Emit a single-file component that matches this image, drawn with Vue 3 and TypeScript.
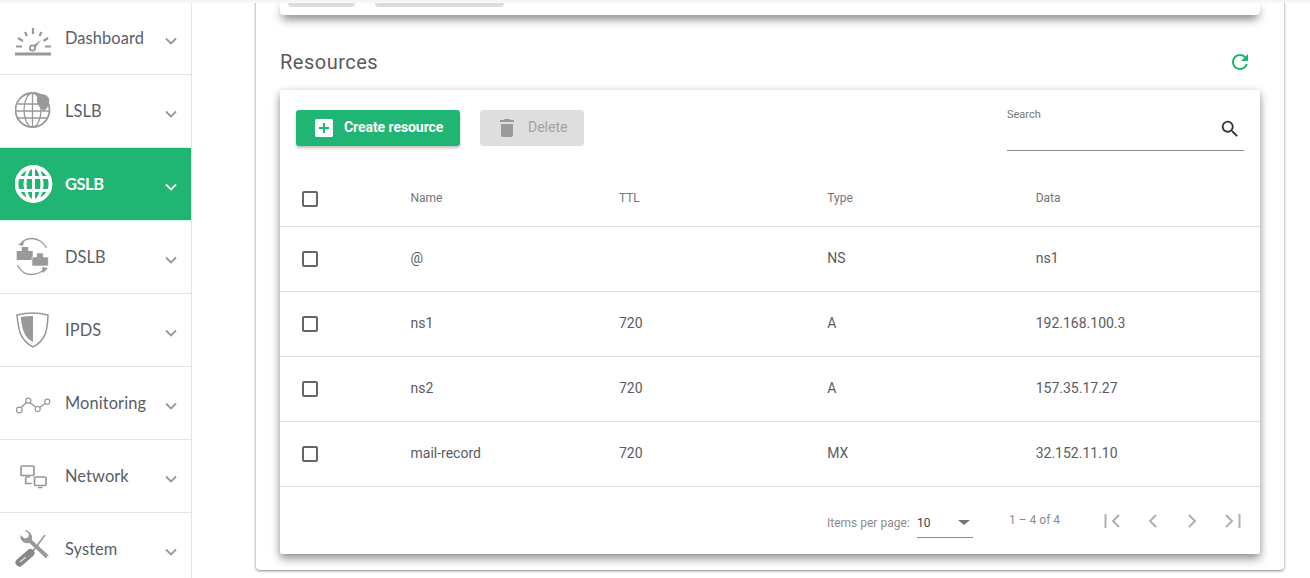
<script setup lang="ts">
const navItems = [
  { key: 'dashboard', label: 'Dashboard', active: false, box: '15 14 40 48' },
  { key: 'lslb', label: 'LSLB', active: false, box: '15 87 40 48' },
  { key: 'gslb', label: 'GSLB', active: true, box: '15 160 40 48' },
  { key: 'dslb', label: 'DSLB', active: false, box: '15 233 40 48' },
  { key: 'ipds', label: 'IPDS', active: false, box: '15 306 40 48' },
  { key: 'monitoring', label: 'Monitoring', active: false, box: '15 379 40 48' },
  { key: 'network', label: 'Network', active: false, box: '15 452 40 48' },
  { key: 'system', label: 'System', active: false, box: '15 525 40 48' },
]
const rows = [
  { name: '@', ttl: '', type: 'NS', data: 'ns1' },
  { name: 'ns1', ttl: '720', type: 'A', data: '192.168.100.3' },
  { name: 'ns2', ttl: '720', type: 'A', data: '157.35.17.27' },
  { name: 'mail-record', ttl: '720', type: 'MX', data: '32.152.11.10' },
]
</script>

<template>
  <div class="page">
    <div class="topshade"></div>
    <nav class="sidebar">
      <div v-for="item in navItems" :key="item.key" class="nav-item" :class="{ active: item.active }">
        <svg class="nav-icon" width="40" height="48" :viewBox="item.box">
          <g v-if="item.key === 'dashboard'">
            <path d="M33 28v6M25 32l2 4M41.500 32l-2 4M18 38l5 3M48 38l-4.500 3M16 46.500h6M45 46.500h6" fill="none" stroke="#999" stroke-width="2.200" />
            <circle cx="32.500" cy="48" r="2.600" fill="none" stroke="#999" stroke-width="1.800" />
            <path d="M33 45.500l8-5.500-5.500 7.500z" fill="#999" />
            <rect x="15" y="52.500" width="36" height="3" fill="#999" />
          </g>
          <g v-else-if="item.key === 'lslb'">
            <g fill="none" stroke="#999" stroke-width="1.300">
              <circle cx="32.500" cy="110" r="17" stroke-width="1.800" />
              <ellipse cx="32.500" cy="110" rx="8.500" ry="17" />
              <path d="M32.500 93v34M17.500 104h30M16 111h33M18 118h29" />
            </g>
            <path d="M38 95c4-2 10 0 11 4 1 4-1 9-5 12-3-2-6-5-7-9-.5-3 0-5 1-7z" fill="#999" />
          </g>
          <g v-else-if="item.key === 'gslb'" fill="none" stroke="#fff">
            <circle cx="33.500" cy="184" r="17" stroke-width="3.800" />
            <ellipse cx="33.500" cy="184" rx="8.500" ry="17" stroke-width="3" />
            <path d="M33.500 167v34M18 177.500h31M18 190.500h31" stroke-width="3" />
          </g>
          <g v-else-if="item.key === 'dslb'">
            <path d="M21 243c3-3 7-4.500 11-4.500 6 0 12 4 14.500 9.500M17.500 265c3 6 8 9.500 13.500 9.500 6 0 10-2 13.500-5" fill="none" stroke="#999" stroke-width="1.300" />
            <path d="M18 244.500l6-3.500-1 5zM48 268l-6-1 1 6z" fill="#999" />
            <path d="M16.700 251h5v-4h6.600v4h4.400v9h-16z" fill="#999" />
            <path d="M32 257h4.700v-4h6.600v4h5v9H32z" fill="#999" stroke="#fff" stroke-width=".6" />
          </g>
          <g v-else-if="item.key === 'ipds'">
            <path d="M17 315c10-2.500 21-2.500 31 0-.5 14-1.500 25-15 32-13.500-7-14.500-18-16-32z" fill="#fff" stroke="#999" stroke-width="1.500" />
            <path d="M20.700 317c4-.6 8-1 12.300-1v26c-9-4.500-11-13-12.300-25z" fill="#999" />
          </g>
          <g v-else-if="item.key === 'monitoring'" fill="none" stroke="#999" stroke-width="1.200">
            <circle cx="19.300" cy="410" r="2.800" />
            <circle cx="28.300" cy="400.700" r="2.500" />
            <circle cx="37.700" cy="409" r="2.500" />
            <circle cx="47.300" cy="401.700" r="2.500" />
            <path d="M21 407.500l5.500-5M30 402.500l5.500 4.500M39.700 407.500l5.500-4" stroke-width="1.500" />
          </g>
          <g v-else-if="item.key === 'network'" fill="none" stroke="#999" stroke-width="1.700">
            <rect x="21" y="466" width="13" height="9.500" rx="1" />
            <rect x="34.500" y="477" width="11.500" height="8.500" rx="1" />
            <path d="M25.700 478v5.500h6M25 477h5M38 487.500h4.500" />
          </g>
          <g v-else>
            <path d="M29 540l18.500 17" stroke="#999" stroke-width="3.800" fill="none" />
            <path d="M24.500 530l4.500 4-1 3.500-3.500 1-4-3.500c-.5 3 .5 6 3.500 7.500 2.500 1.200 4.500 1 6.500-.5 2-2.500 2-5 1-7-1.500-3-4-5-7-5z" fill="#999" />
            <circle cx="48" cy="557" r="1.200" fill="#fff" />
            <path d="M33 551l12-16" stroke="#999" stroke-width="1.600" fill="none" />
            <path d="M19.500 562.500l11-9.500" stroke="#888" stroke-width="8" stroke-linecap="round" fill="none" />
            <path d="M20 562l6-5" stroke="#ddd" stroke-width="1.200" fill="none" />
          </g>
        </svg>
        <span class="nav-label">{{ item.label }}</span>
        <svg class="chev" width="12" height="8" viewBox="0 0 12 8"><path d="M1 1.500l5 5 5-5" fill="none" stroke="currentColor" stroke-width="1.800" /></svg>
      </div>
    </nav>

    <main class="main">
      <div class="outer">
        <div class="top-card">
          <span class="stub stub-a"></span>
          <span class="stub stub-b"></span>
        </div>

        <div class="section-head">
          <h2>Resources</h2>
          <svg width="24" height="24" viewBox="0 0 24 24"><path fill="#21b573" d="M17.650 6.350A7.958 7.958 0 0 0 12 4c-4.420 0-7.990 3.580-7.990 8s3.570 8 7.990 8c3.730 0 6.840-2.550 7.730-6h-2.080A5.990 5.990 0 0 1 12 18c-3.310 0-6-2.690-6-6s2.690-6 6-6c1.660 0 3.140.69 4.220 1.780L13 11h7V4l-2.350 2.350z" /></svg>
        </div>

        <section class="card">
          <div class="toolbar">
            <button class="btn primary">
              <svg width="18" height="18" viewBox="0 0 18 18"><rect width="18" height="18" rx="1.500" fill="#fff" /><path d="M9 4v10M4 9h10" stroke="#21b573" stroke-width="2" /></svg>
              <span>Create resource</span>
            </button>
            <button class="btn disabled">
              <svg width="14" height="18" viewBox="0 0 14 18"><path fill="#9a9a9a" d="M1 5h12v11a2 2 0 0 1-2 2H3a2 2 0 0 1-2-2zM14 1v2H0V1h3.500l1-1h5l1 1z" /></svg>
              <span>Delete</span>
            </button>
            <div class="search">
              <label>Search</label>
              <svg width="22" height="22" viewBox="0 0 24 24"><path fill="#333" d="M15.500 14h-.79l-.28-.27A6.471 6.471 0 0 0 16 9.500 6.500 6.500 0 1 0 9.500 16c1.610 0 3.090-.59 4.230-1.570l.27.28v.79l5 4.990L20.490 19l-4.990-5zm-6 0C7.010 14 5 11.990 5 9.500S7.010 5 9.500 5 14 7.010 14 9.500 11.990 14 9.500 14z" /></svg>
            </div>
          </div>

          <div class="row head">
            <span class="cell-check"><i class="box"></i></span>
            <span>Name</span><span>TTL</span><span>Type</span><span>Data</span>
          </div>
          <div v-for="r in rows" :key="r.name" class="row body">
            <span class="cell-check"><i class="box"></i></span>
            <span class="txt">{{ r.name }}</span><span class="txt">{{ r.ttl }}</span><span class="txt">{{ r.type }}</span><span class="txt">{{ r.data }}</span>
          </div>

          <div class="pager">
            <span class="ipp">Items per page:</span>
            <span class="select"><span>10</span><i class="caret"></i></span>
            <span class="range">1 – 4 of 4</span>
            <span class="pager-btns">
              <svg width="18" height="14" viewBox="0 0 18 14"><path d="M1.500 0v14M15 1L9 7l6 6" fill="none" stroke="#b0b0b0" stroke-width="2" /></svg>
              <svg width="18" height="14" viewBox="0 0 18 14"><path d="M12 1L6 7l6 6" fill="none" stroke="#b0b0b0" stroke-width="2" /></svg>
              <svg width="18" height="14" viewBox="0 0 18 14"><path d="M6 1l6 6-6 6" fill="none" stroke="#b0b0b0" stroke-width="2" /></svg>
              <svg width="18" height="14" viewBox="0 0 18 14"><path d="M16.500 0v14M3 1l6 6-6 6" fill="none" stroke="#b0b0b0" stroke-width="2" /></svg>
            </span>
          </div>
        </section>
      </div>
    </main>
  </div>
</template>

<style>
html, body { margin: 0; background: #fff; overflow: hidden; }
</style>

<style scoped>
.page {
  position: relative;
  display: flex;
  width: 1310px;
  height: 578px;
  overflow: hidden;
  background: #fff;
  font-family: Roboto, sans-serif;
}
.topshade {
  position: absolute;
  inset: 0 0 auto 0;
  height: 3px;
  background: linear-gradient(#f2f2f2, #fbfbfb);
  z-index: 3;
}
.sidebar {
  width: 192px;
  flex: none;
  box-sizing: border-box;
  padding-top: 2px;
  border-right: 1px solid #e4e4e4;
}
.nav-item {
  height: 73px;
  box-sizing: border-box;
  display: flex;
  align-items: center;
  padding: 0 14px 0 15px;
  border-bottom: 1px solid #e4e4e4;
  color: #5a5e66;
}
.nav-item.active {
  background: #21b573;
  color: #fff;
  border-bottom-color: #d8f6ea;
}
.nav-icon {
  flex: none;
  margin-right: 10px;
}
.nav-label {
  flex: 1;
  margin-top: -2px;
  font-size: 16.4px;
  letter-spacing: .1px;
  font-family: Lato, sans-serif;
  font-weight: 400;
}
.active .nav-label { font-weight: 700; letter-spacing: -.4px; }
.chev { color: #999; margin-top: 6px; }
.active .chev { color: #fff; }

.main {
  flex: 1;
  padding: 0 26px 0 64px;
  min-width: 0;
}
.outer {
  height: 570px;
  box-sizing: border-box;
  padding: 0 24px;
  border-radius: 0 0 4px 4px;
  box-shadow: 0 1px 3px rgba(0,0,0,.45), 0 0 2px rgba(0,0,0,.12);
}
.top-card {
  height: 15px;
  box-sizing: border-box;
  padding-left: 8px;
  display: flex;
  gap: 20px;
  align-items: flex-start;
  border-radius: 0 0 4px 4px;
  box-shadow: 0 6px 10px -2px rgba(0,0,0,.5);
}
.stub { display: block; height: 7px; background: #dcdcdc; border-radius: 0 0 4px 4px; }
.stub-a { width: 67px; }
.stub-b { width: 129px; }

.section-head {
  height: 75px;
  display: flex;
  align-items: center;
  justify-content: space-between;
  padding-right: 8px;
  padding-top: 19px;
  box-sizing: border-box;
}
.section-head h2 {
  margin: 0;
  font-size: 20px;
  font-weight: 400;
  color: #5a5a5a;
  letter-spacing: .5px;
}
.card {
  height: 464px;
  background: #fff;
  border-radius: 2px;
  box-shadow: 0 5px 10px 0 rgba(0,0,0,.4), 0 0 6px rgba(0,0,0,.1);
}
.toolbar {
  height: 80px;
  box-sizing: border-box;
  padding: 20px 16px 0;
  display: flex;
  align-items: flex-start;
  gap: 20px;
}
.btn {
  height: 36px;
  border: 0;
  border-radius: 3px;
  display: flex;
  align-items: center;
  font-family: Roboto, sans-serif;
  font-size: 14px;
}
.btn span { margin-top: -2px; }
.primary {
  width: 164px;
  padding: 0 0 0 19px;
  gap: 11px;
  background: #21b573;
  color: #fff;
  font-weight: 700;
  letter-spacing: -.07px;
  box-shadow: 0 2px 3px rgba(0,0,0,.25);
}
.disabled {
  width: 104px;
  padding: 0 0 0 20px;
  gap: 14px;
  background: #dedede;
  color: #a3a3a3;
}
.search {
  position: relative;
  margin-left: auto;
  width: 237px;
  height: 41px;
  box-sizing: border-box;
  border-bottom: 1px solid #8a8a8a;
  font-size: 11px;
  color: #757575;
}
.search label { position: absolute; left: 0; top: -2px; }
.search svg { position: absolute; right: 3px; top: 8px; }

.row {
  display: grid;
  grid-template-columns: 130.5px 208.4px 208.4px 208.4px 1fr;
  align-items: center;
  box-sizing: border-box;
  border-bottom: 1px solid #e0e0e0;
}
.head {
  height: 57px;
  font-size: 12px;
  color: #757575;
}
.body {
  height: 65px;
  font-size: 14px;
  color: #5c5c5c;
}
.txt { margin-top: -2px; }
.cell-check { padding-left: 22px; display: flex; }
.box {
  width: 16px;
  height: 16px;
  box-sizing: border-box;
  border: 2px solid #666;
  border-radius: 2px;
}
.head .cell-check { margin-top: 2px; }
.pager {
  height: 67px;
  display: flex;
  align-items: center;
  font-size: 12px;
  color: #8c8c8c;
  padding-left: 547px;
  box-sizing: border-box;
}
.ipp { margin-top: 5px; width: 90px; }
.select {
  width: 56px;
  height: 29px;
  box-sizing: border-box;
  margin-top: 5px;
  border-bottom: 1px solid #8a8a8a;
  display: flex;
  justify-content: space-between;
  align-items: center;
  color: #444;
  padding-right: 3px;
}
.caret {
  width: 0;
  height: 0;
  border: 6px solid transparent;
  border-top: 5px solid #757575;
  border-bottom: 0;
}
.range { margin-left: 36px; width: 95px; margin-top: -2px; }
.pager-btns { display: flex; gap: 21.5px; }
</style>
